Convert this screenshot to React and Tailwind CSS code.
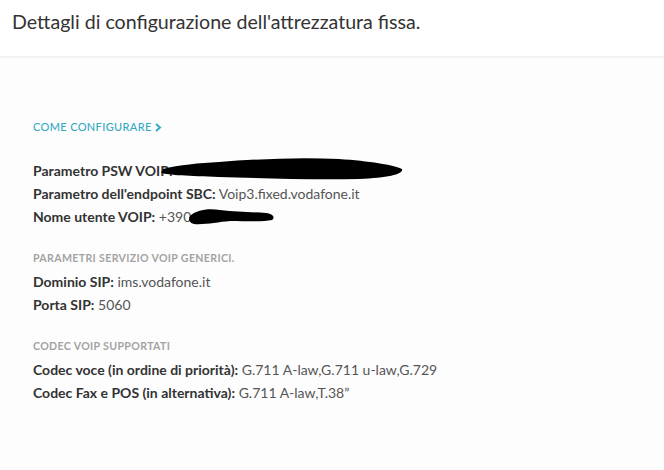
import React from 'react';

const Row = ({ label, children }) => (
  <div className="text-[14px] leading-[23px] text-[#333]">
    <span className="font-bold">{label}</span>{' '}
    <span className="text-[#555]">{children}</span>
  </div>
);

const Heading = ({ children, className = '' }) => (
  <div className={`text-[10.6px] leading-[16px] font-bold uppercase tracking-[0.35px] text-[#a3a3a3] ${className}`}>
    {children}
  </div>
);

// scribbled-out bits in the screenshot
const Redaction = ({ className, d, w, h }) => (
  <svg className={className} width={w} height={h} viewBox={`0 0 ${w} ${h}`}>
    <path d={d} fill="#000" />
  </svg>
);

export default function App() {
  return (
    <div className="min-h-[470px] bg-[#fdfdfd]" style={{ fontFamily: 'Lato, "Open Sans", sans-serif' }}>
      {/* Header */}
      <div className="h-[58px] bg-white border-b-2 border-[#f1f1f1] px-3 pt-[8px]">
        <h1 className="text-[19.6px] leading-[28px] text-[#333]">Dettagli di configurazione dell'attrezzatura fissa.</h1>
      </div>

      {/* Body */}
      <div className="pl-[33px] pt-[61px]">
        <a className="flex items-center gap-[3px] text-[11px] leading-[16px] font-medium uppercase tracking-[0.35px] text-[#35aac3]">
          Come configurare
          <svg width="7" height="9" viewBox="0 0 7 9">
            <path d="M1 1 L5 4.5 L1 8" stroke="#35aac3" strokeWidth="2" fill="none" />
          </svg>
        </a>

        <div className="mt-[24px]">
          <div className="relative">
            <Row label="Parametro PSW VOIP:">&nbsp;</Row>
            <Redaction
              className="absolute left-[126px] top-[-3px]"
              w={245}
              h={26}
              d="M4 13 C20 9 40 7 60 6 C100 3 140 1 180 3 C210 5 235 9 243 13 C245 18 230 22 200 23 C150 24 100 22 60 21 C30 20 10 19 2 17 Z"
            />
          </div>
          <Row label="Parametro dell'endpoint SBC:">Voip3.fixed.vodafone.it</Row>
          <div className="relative">
            <Row label="Nome utente VOIP:">+390</Row>
            <Redaction
              className="absolute left-[155px] top-[2px]"
              w={88}
              h={20}
              d="M2 9 C8 3 20 1 32 3 C48 5 64 5 78 6 C86 7 87 11 84 13 C76 15 58 14 42 14 C30 15 16 18 6 17 C1 16 0 12 2 9 Z"
            />
          </div>
        </div>

        <Heading className="mt-[22px]">Parametri servizio VOIP generici.</Heading>
        <div className="mt-[4px]">
          <Row label="Dominio SIP:">ims.vodafone.it</Row>
          <Row label="Porta SIP:">5060</Row>
        </div>

        <Heading className="mt-[22px]">Codec VOIP supportati</Heading>
        <div className="mt-[4px]">
          <Row label="Codec voce (in ordine di priorità):">G.711 A-law,G.711 u-law,G.729</Row>
          <Row label="Codec Fax e POS (in alternativa):">G.711 A-law,T.38”</Row>
        </div>
      </div>
    </div>
  );
}
